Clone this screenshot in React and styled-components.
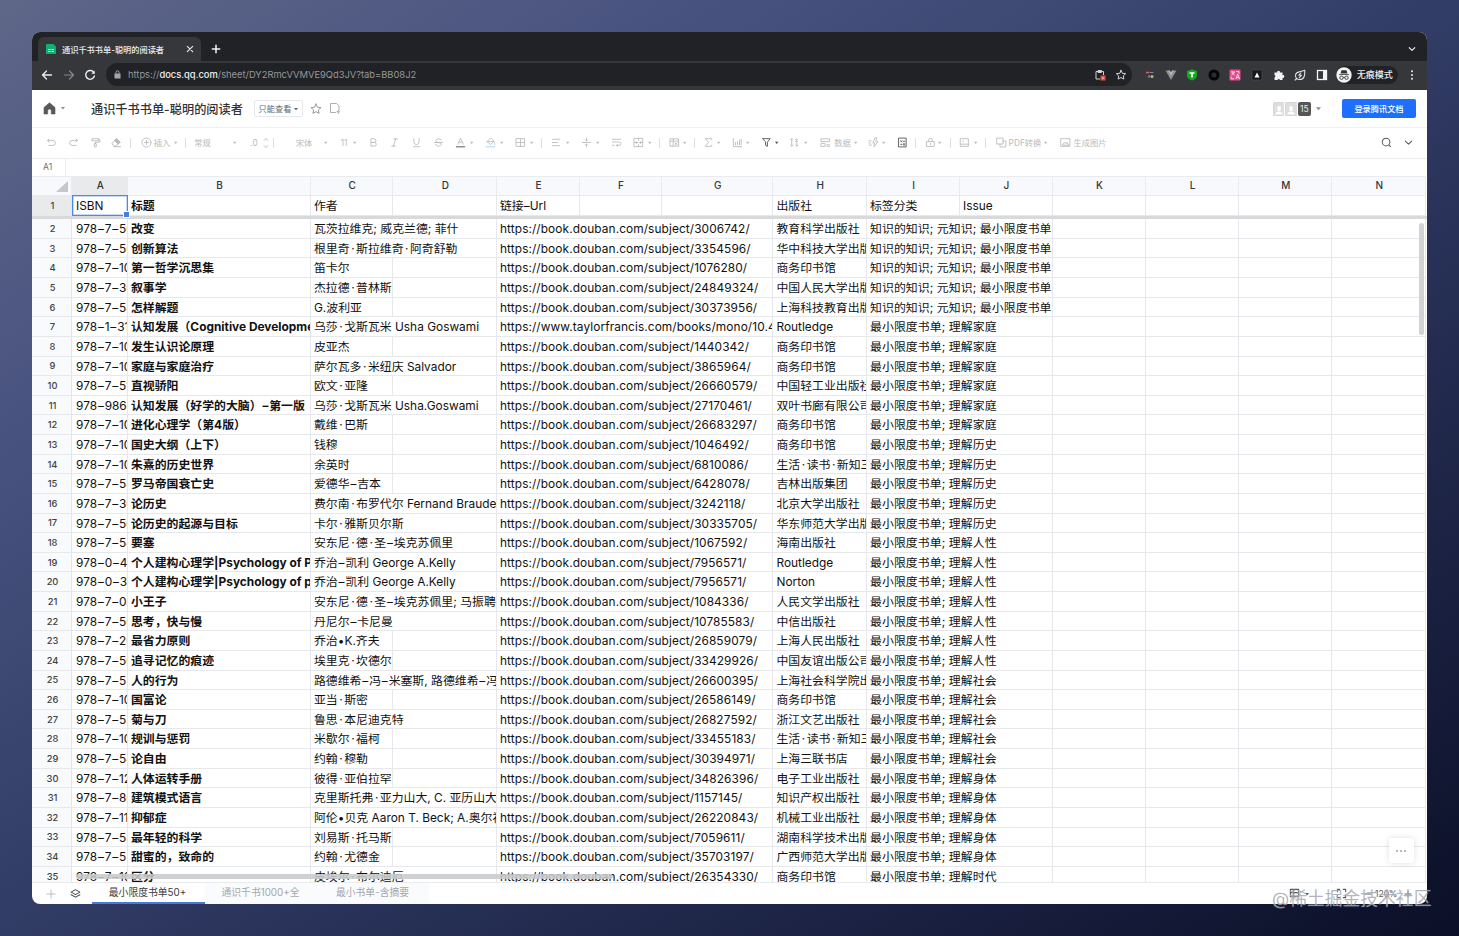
import React from "react";
import styled, { createGlobalStyle, css } from "styled-components";

const Global = createGlobalStyle`
  * { box-sizing: border-box; }
  html, body { margin: 0; height: 100%; }
  body { overflow: hidden; font-family: Inter, "Noto Sans CJK SC", sans-serif; }
`;

const Desktop = styled.div`
  position: relative;
  width: 1459px;
  height: 936px;
  padding: 32px;
  background: linear-gradient(148deg, #5e6788 0%, #4a5480 22%, #333e68 48%, #20284b 72%, #0b0f27 100%);
`;

const Window = styled.div`
  width: 1395px;
  height: 872px;
  display: flex;
  flex-direction: column;
  border-radius: 8px;
  overflow: hidden;
  background: #fff;
`;

/* Browser chrome */
const TabStrip = styled.div`
  height: 29px;
  flex: none;
  display: flex;
  align-items: flex-end;
  padding: 0 11px 0 6px;
  background: #202226;
`;
const BrowserTab = styled.div`
  width: 163px;
  height: 24px;
  display: flex;
  align-items: center;
  padding: 0 5px 0 8px;
  background: #36373b;
  border-radius: 6px 6px 0 0;
  color: #eceded;
`;
const TabTitle = styled.span`
  width: 124px;
  margin-left: 6px;
  padding-bottom: 1px;
  font-size: 8.2px;
  font-weight: 500;
  white-space: nowrap;
`;
const NewTab = styled.div`
  margin-left: 10px;
  height: 24px;
  flex: 1;
  display: flex;
  align-items: center;
  justify-content: space-between;
`;
const AddressRow = styled.div`
  height: 29px;
  flex: none;
  display: flex;
  align-items: center;
  padding: 0 0 2px 9px;
  background: #36373b;
`;
const AddressBar = styled.div`
  width: 1026px;
  height: 23px;
  margin-left: 10px;
  padding: 0 5px 0 8px;
  display: flex;
  align-items: center;
  border-radius: 12px;
  background: #202226;
`;
const Url = styled.span`
  flex: 1;
  margin-left: 7px;
  font-size: 9.4px;
  letter-spacing: -0.02px;
  white-space: nowrap;
  color: #96989b;
  b { font-weight: 500; color: #eeeff0; }
`;
const Extensions = styled.div`
  display: flex;
  align-items: center;
  gap: 9.6px;
  margin-left: 11px;
`;
const Incognito = styled.div`
  width: 62px;
  height: 18px;
  margin-left: 8px;
  display: flex;
  align-items: center;
  border-radius: 9px;
  background: #202226;
  color: #f0f0f0;
  font-size: 9px;
  font-weight: 500;
  white-space: nowrap;
  svg { margin-right: 5px; }
`;

/* Document header */
const Header = styled.header`
  height: 38px;
  flex: none;
  display: flex;
  align-items: center;
  padding: 0 11px;
  border-bottom: 1px solid #f1f2f3;
  color: #8b8d90;
`;
const DocTitle = styled.h1`
  width: 152px;
  margin: 0 11px 0 26px;
  font-size: 12.2px;
  font-weight: 500;
  white-space: nowrap;
  color: #303236;
`;
const ReadOnly = styled.div`
  width: 49px;
  height: 17px;
  margin-right: 7px;
  display: flex;
  align-items: center;
  justify-content: center;
  gap: 3px;
  border: 1px solid #e6e7e9;
  border-radius: 2px;
  font-size: 8.2px;
  line-height: 14px;
  color: #66686c;
  white-space: nowrap;
`;
const Avatars = styled.div`
  display: flex;
  align-items: center;
  margin-left: auto;
`;
const Avatar = styled.div`
  width: 12.5px;
  height: 14px;
  border: 1px solid #d6d6d6;
  border-right-color: #fff;
  border-radius: 2px;
  display: flex;
  justify-content: center;
  align-items: flex-end;
  background: #dedede;
`;
const Count = styled.div`
  width: 13.5px;
  height: 14px;
  margin-right: 5px;
  border-radius: 2px;
  background: #555658;
  color: #e9e9e9;
  font-size: 8.5px;
  line-height: 14px;
  text-align: center;
`;
const LoginButton = styled.button`
  width: 74px;
  height: 19px;
  margin-left: 21px;
  padding: 0 0 1px;
  border: 0;
  border-radius: 2px;
  background: #1e6fff;
  color: #fff;
  font: 500 8.2px Inter, "Noto Sans CJK SC", sans-serif;
  white-space: nowrap;
`;

/* Toolbar */
const Toolbar = styled.div`
  height: 31px;
  flex: none;
  display: flex;
  align-items: center;
  padding: 0 13px;
  border-bottom: 1px solid #ebecee;
  color: #b9babc;
`;
const Tool = styled.span`
  width: ${(p) => p.$w}px;
  margin-left: ${(p) => p.$gap}px;
  flex: none;
  display: flex;
  align-items: center;
  justify-content: center;
  white-space: nowrap;
  font-size: 8.3px;
  line-height: 12px;
  padding-bottom: 1px;
  ${(p) => p.$dark && css`color: #4c4e52;`}
`;
const Divider = styled.i`
  width: 1px;
  height: 10px;
  flex: none;
  margin-left: ${(p) => p.$gap}px;
  background: #dddee0;
`;
const ToolEnd = styled.div`
  display: flex;
  align-items: center;
  gap: 11px;
  margin-left: auto;
  margin-right: 0.5px;
  padding-bottom: 1px;
  color: #55575b;
`;
const FormulaBar = styled.div`
  height: 17px;
  flex: none;
  display: flex;
`;
const CellName = styled.div`
  width: 34px;
  padding-left: 11px;
  border-right: 1px solid #ececee;
  font-size: 8.6px;
  line-height: 17px;
  color: #6d6f73;
`;

/* Grid */
const Sheet = styled.main`
  position: relative;
  height: 706px;
  flex: none;
  overflow: hidden;
`;
const Line = styled.div`
  display: flex;
  height: ${(p) => p.$h ?? 19.625}px;
`;
const ColHead = styled.div`
  width: ${(p) => p.$w}px;
  flex: none;
  display: flex;
  align-items: center;
  justify-content: center;
  padding-left: 2px;
  padding-bottom: 1px;
  border: solid #e9ebef;
  border-width: 1px 1px 1px 0;
  background: ${(p) => (p.$active ? "#e9eaec" : "#f8f9fc")};
  color: #333539;
  font-size: 10px;
  font-weight: 500;
`;
const Corner = styled(ColHead)`
  justify-content: flex-end;
  align-items: flex-end;
  padding: 0 2px 2px 0;
`;
const RowHead = styled.div`
  width: 40px;
  flex: none;
  display: flex;
  align-items: center;
  justify-content: center;
  padding-left: 2px;
  border-right: 1px solid #e3e5e9;
  border-bottom: 1px solid #e6e8ec;
  background: ${(p) => (p.$active ? "#e9eaec" : "#f9fafc")};
  color: #3f4145;
  font-size: 9.3px;
  font-weight: 500;
`;
const Cell = styled.div`
  width: ${(p) => p.$w}px;
  flex: none;
  overflow: hidden;
  padding-left: ${(p) => p.$pad ?? 3.5}px;
  border-right: 1px solid #e6e8ec;
  border-bottom: 1px solid #e6e8ec;
  font-size: 11.88px;
  line-height: 19.4px;
  white-space: pre;
  color: #111;
  font-weight: ${(p) => (p.$bold ? 700 : 400)};
  letter-spacing: ${(p) => p.$track ?? 0}px;
`;
const Mark = styled.span`
  padding: 0 ${(p) => p.$side}px;
`;
const FreezeBar = styled.div`
  height: 3.6px;
  background: #d8d9da;
`;
const Selection = styled.div`
  position: absolute;
  left: 40px;
  top: 19px;
  width: 56px;
  height: 21px;
  border: 1px solid #5088e4;
  box-shadow: inset 0 0 0 0.5px #8fb3f0;
  &::after {
    content: "";
    position: absolute;
    right: -3px;
    bottom: -3px;
    width: 5px;
    height: 5px;
    border: 1px solid #fff;
    background: #4a80dc;
  }
`;
const VScroll = styled.div`
  position: absolute;
  right: 3px;
  top: 47px;
  width: 5px;
  height: 112px;
  border-radius: 3px;
  background: #d2d3d5;
`;
const HScroll = styled.div`
  position: absolute;
  left: 44px;
  bottom: 3px;
  width: 537px;
  height: 5px;
  border-radius: 3px;
  background: rgba(200, 201, 203, 0.88);
`;
const MoreButton = styled.div`
  position: absolute;
  right: 13.5px;
  bottom: 19px;
  width: 25px;
  height: 25px;
  display: flex;
  align-items: center;
  justify-content: center;
  border-radius: 3px;
  background: #fff;
  box-shadow: 0 0 6px rgba(0, 0, 0, 0.13);
  color: #606266;
`;

/* Sheet tabs */
const Footer = styled.footer`
  flex: 1;
  display: flex;
  align-items: stretch;
  border-top: 1px solid #eaebed;
`;
const FooterTools = styled.div`
  width: 60px;
  display: flex;
  align-items: center;
  gap: 14px;
  padding-left: 14px;
`;
const SheetTab = styled.div`
  width: ${(p) => p.$w}px;
  display: flex;
  align-items: center;
  justify-content: center;
  padding-bottom: ${(p) => (p.$active ? 1 : 3)}px;
  padding-right: 2px;
  border-bottom: ${(p) => (p.$active ? "2px solid #4779dc" : "0")};
  background: ${(p) => (p.$active ? "#fff" : "#fafbfc")};
  color: ${(p) => (p.$active ? "#37393d" : "#a5a7aa")};
  font-size: 9.8px;
  white-space: nowrap;
`;
const Status = styled.div`
  margin-left: auto;
  width: 138px;
  display: flex;
  align-items: center;
  font-size: 8.5px;
  color: #55575b;
`;
const StatusItem = styled.span`
  display: flex;
  margin-right: ${(p) => p.$gap}px;
`;
const Watermark = styled.div`
  position: absolute;
  left: 1272px;
  top: 887px;
  font-size: 17.8px;
  line-height: 24px;
  white-space: nowrap;
  color: rgba(150, 152, 160, 0.72);
  text-shadow: 0 0 1px rgba(255, 255, 255, 0.55);
`;

const Icon = ({ d, size = 12, w = 1, fill = "none", box = 12, children, color = "currentColor" }) => (
  <svg width={size} height={size} viewBox={`0 0 ${box} ${box}`} fill={fill} stroke={color} strokeWidth={w} strokeLinecap="round" strokeLinejoin="round">
    {d && <path d={d} />}
    {children}
  </svg>
);

const Caret = ({ size = 4 }) => (
  <svg width={size} height={size} viewBox="0 0 4 4"><path d="M0 1h4L2 3.4z" fill="currentColor" /></svg>
);

const toolPaths = {
  undo: "M3.500 2 1.600 3.800l1.900 1.800M1.800 3.800h5.700a2.700 2.700 0 0 1 0 5.400H3",
  redo: "M8.500 2l1.900 1.800-1.900 1.800M10.200 3.800H4.500a2.700 2.700 0 0 0 0 5.400H9",
  painter: "M2.500 1.800h7v2.400h-7zM9.500 3h1.200v2.600H6v1.600M5.200 7.200h1.600v3.600H5.200z",
  plus: "M11 6A5 5 0 1 1 1 6a5 5 0 0 1 10 0M6 3.700v4.600M3.700 6h4.600",
  bold: "M3.600 2h3a2 2 0 0 1 0 4h-3zM3.600 6h3.500a2 2 0 0 1 0 4H3.600z",
  italic: "M5.200 2H9M3 10h3.800M7.300 2 4.700 10",
  underline: "M3.200 1.800v3.600a2.800 2.800 0 0 0 5.600 0V1.800M2.800 10.600h6.400",
  strike: "M9 3.600C8.600 2.400 7.400 2 6 2c-1.600 0-2.800.8-2.800 2 0 2.700 5.800 1.500 5.800 4 0 1.200-1.300 2-3 2-1.600 0-2.800-.6-3-2M1.500 6h9",
  border: "M1.500 1.800h9v8.400h-9zM6 1.800v8.400M1.500 6h9",
  align: "M1.500 2.500h8M1.500 6h5.500M1.500 9.500h8",
  valign: "M1.500 6h9M6 1.200v3M4.800 3.200 6 4.400l1.200-1.200M6 10.800v-3M4.800 8.800 6 7.600l1.200 1.200",
  wrap: "M1.500 2.500h9M1.500 5.500h7.500a1.800 1.800 0 0 1 0 3.600H6M7.200 7.900 6 9.100l1.200 1.200M1.500 9.100h2",
  merge: "M1.500 1.500h9v9h-9zM6 1.500v2M6 8.500v2M1.500 6h3M3.600 4.800 4.800 6 3.600 7.200M10.500 6h-3M8.400 4.800 7.200 6l1.200 1.200",
  table: "M1.500 2h9v8h-9zM1.500 4.500h9M4.500 2v8M6.500 6.400l2.400 2M8.900 6.400l-2.400 2",
  sigma: "M9.500 3V1.800H2.500L6 6 2.500 10.200h7V9",
  chart: "M1.500 2v8.500h9M3.800 8.500V6M6 8.500V5M8.200 8.500V3.500M10 8.500V2.500",
  filter: "M2 1.800h8L7 5.600v4.600L5 9.200V5.600z",
  sort: "M3 2v8M1.800 8.800 3 10l1.200-1.200M1.800 2.500h2M7 2.500h2.500L7 5h2.500M8.500 6.500V10M7.300 8.800 8.500 10l1.200-1.200",
  data: "M1.500 2h9v3h-9zM1.500 7h4v3.200h-4zM7.500 8.500h3M7.500 10.200h3",
  bolt: "M7.500 1.200 5.200 6.500h2L6.500 10.800 10.800 5H8.500l.8-3.800zM1 4.200h2.600M.8 6.500h2M1.200 8.800h2.600",
  calc: "M2 1.200h8v9.600H2zM4 4l1.500 1.500M5.500 4 4 5.500M7 4.700h1.500M4 8h1.500M7 7.500h1.500M7 8.700h1.500",
  lock: "M2 5h8v5.300H2zM4 5V3.500a2 2 0 0 1 4 0V5M6 7v1.400",
  frame: "M1.800 1.800h8.400v8.400H1.800zM1.800 7.800h8.400M4 4.500h1",
  pdf: "M1.200 1.200h6.500v6.500H1.200zM4.300 7.700v3.100h6.500V4.300H7.700",
  pic: "M1.200 1.800h9.600v8.400H1.200zM2.800 8.600 5 5.600l1.600 1.800L7.800 6l1.600 2.600z",
};

/* kind, gap before, width, label, enabled */
const tools = [
  ["undo", 0], ["redo", 10], ["painter", 10], ["eraser", 9], ["|", 8],
  ["plus", 9], ["t", 2, 16, "插入"], ["v", 4], ["|", 7], ["t", 8, 17, "常规"], ["v", 22], ["t", 12, 10, ".0"], ["step", 4, 6], ["|", 4],
  ["t", 21, 18, "宋体"], ["v", 11], ["t", 11, 10, "11"], ["v", 4], ["bold", 10], ["italic", 9], ["underline", 10], ["strike", 10],
  ["color", 10], ["v", 4], ["bucket", 10], ["v", 4], ["border", 10], ["v", 4], ["|", 7],
  ["align", 8], ["v", 4], ["valign", 10], ["v", 4], ["wrap", 10], ["merge", 10], ["v", 4], ["|", 7],
  ["table", 8], ["v", 3], ["|", 7], ["sigma", 7], ["v", 3], ["chart", 10], ["v", 3], ["filter", 10, 12, "", true], ["v", 3, 4, "", true],
  ["sort", 9], ["v", 4], ["data", 11], ["t", 3, 17, "数据"], ["v", 3], ["bolt", 9], ["v", 3], ["calc", 10, 12, "", true], ["|", 7],
  ["lock", 8], ["v", 2], ["|", 8], ["frame", 7], ["v", 4], ["|", 7], ["pdf", 9], ["t", 2, 32, "PDF转换"], ["v", 3], ["pic", 11], ["t", 2, 34, "生成图片"],
];

function ToolGlyph({ kind, text }) {
  if (kind === "t") return text;
  if (kind === "v") return <Caret size={3.4} />;
  if (kind === "step")
    return <svg width="6" height="12" viewBox="0 0 6 12" fill="none" stroke="currentColor"><path d="M1 3.500 3 1.500l2 2M1 8.500l2 2 2-2" /></svg>;
  if (kind === "eraser")
    return <Icon size={11} w={1}><path d="M1.500 6.500 6 2l4 3.500-4.300 4.300H3.500L1.500 8zM3 10.500h7.500" /><path d="M6 2l4 3.500L7.800 7.800 4 4z" fill="currentColor" /></Icon>;
  if (kind === "color")
    return <Icon size={11} w={0.9}><path d="M3 8 6 1.200 9 8M4.100 5.700h3.800" /><path d="M1 10.700h10" strokeWidth="1.600" strokeLinecap="butt" stroke="#8f9092" /></Icon>;
  if (kind === "bucket")
    return <Icon size={11} w={0.9}><path d="M6 1.200 2.200 5 6 8.200 9.600 5zM2.200 5h7.400M10.500 6.500v1.500" /><path d="M1 10.700h10" strokeWidth="1.600" strokeLinecap="butt" stroke="#c4e6f8" /></Icon>;
  return <Icon size={11} w={0.95} d={toolPaths[kind]} />;
}

const columns = [["A", 55.5], ["B", 183], ["C", 82.5], ["D", 103.5], ["E", 83], ["F", 82], ["G", 111.5], ["H", 93.5], ["I", 93], ["J", 93], ["K", 93], ["L", 93], ["M", 93.5], ["N", 93.5]];
const headCells = { A: "ISBN", B: "标题", C: "作者", E: "链接–Url", H: "出版社", I: "标签分类", J: "Issue" };

const know = "知识的知识; 元知识; 最小限度书单";
const min = (s) => `最小限度书单; 理解${s}`;
/* isbn, title, author, link (douban subject id or full address), publisher, tags, whether the author runs over column D */
const books = [
  ["7–50", "改变", "瓦茨拉维克; 威克兰德; 菲什", "3006742", "教育科学出版社", know, 1],
  ["7–50", "创新算法", "根里奇·斯拉维奇·阿奇舒勒", "3354596", "华中科技大学出版社", know, 1],
  ["7–10", "第一哲学沉思集", "笛卡尔", "1076280", "商务印书馆", know],
  ["7–30", "叙事学", "杰拉德·普林斯", "24849324", "中国人民大学出版社", know],
  ["7–54", "怎样解题", "G.波利亚", "30373956", "上海科技教育出版社", know],
  ["1–31", "认知发展（Cognitive Development）", "乌莎·戈斯瓦米 Usha Goswami", "https://www.taylorfrancis.com/books/mono/10.4324", "Routledge", min("家庭"), 1],
  ["7–10", "发生认识论原理", "皮亚杰", "1440342", "商务印书馆", min("家庭")],
  ["7–10", "家庭与家庭治疗", "萨尔瓦多·米纽庆 Salvador", "3865964", "商务印书馆", min("家庭"), 1],
  ["7–51", "直视骄阳", "欧文·亚隆", "26660579", "中国轻工业出版社", min("家庭")],
  ["986–", "认知发展（好学的大脑）–第一版", "乌莎·戈斯瓦米 Usha.Goswami", "27170461", "双叶书廊有限公司", min("家庭"), 1],
  ["7–10", "进化心理学（第4版）", "戴维·巴斯", "26683297", "商务印书馆", min("家庭")],
  ["7–10", "国史大纲（上下）", "钱穆", "1046492", "商务印书馆", min("历史")],
  ["7–10", "朱熹的历史世界", "余英时", "6810086", "生活·读书·新知三联书店", min("历史")],
  ["7–54", "罗马帝国衰亡史", "爱德华–吉本", "6428078", "吉林出版集团", min("历史")],
  ["7–30", "论历史", "费尔南·布罗代尔 Fernand Braudel", "3242118", "北京大学出版社", min("历史"), 1],
  ["7–50", "论历史的起源与目标", "卡尔·雅斯贝尔斯", "30335705", "华东师范大学出版社", min("历史"), 1],
  ["7–54", "要塞", "安东尼·德·圣–埃克苏佩里", "1067592", "海南出版社", min("人性"), 1],
  ["0–41", "个人建构心理学|Psychology of Personal", "乔治–凯利 George A.Kelly", "7956571", "Routledge", min("人性"), 1],
  ["0–31", "个人建构心理学|Psychology of personal", "乔治–凯利 George A.Kelly", "7956571", "Norton", min("人性"), 1],
  ["7–02", "小王子", "安东尼·德·圣–埃克苏佩里; 马振聘", "1084336", "人民文学出版社", min("人性"), 1],
  ["7–50", "思考，快与慢", "丹尼尔–卡尼曼", "10785583", "中信出版社", min("人性"), 1],
  ["7–20", "最省力原则", "乔治•K.齐夫", "26859079", "上海人民出版社", min("人性")],
  ["7–50", "追寻记忆的痕迹", "埃里克·坎德尔", "33429926", "中国友谊出版公司", min("人性")],
  ["7–55", "人的行为", "路德维希–冯–米塞斯, 路德维希–冯", "26600395", "上海社会科学院出版社", min("社会"), 1],
  ["7–10", "国富论", "亚当·斯密", "26586149", "商务印书馆", min("社会")],
  ["7–53", "菊与刀", "鲁思·本尼迪克特", "26827592", "浙江文艺出版社", min("社会"), 1],
  ["7–10", "规训与惩罚", "米歇尔·福柯", "33455183", "生活·读书·新知三联书店", min("社会")],
  ["7–54", "论自由", "约翰·穆勒", "30394971", "上海三联书店", min("社会")],
  ["7–12", "人体运转手册", "彼得·亚伯拉罕", "34826396", "电子工业出版社", min("身体")],
  ["7–80", "建筑模式语言", "克里斯托弗·亚力山大, C. 亚历山大", "1157145", "知识产权出版社", min("身体"), 1],
  ["7–11", "抑郁症", "阿伦•贝克 Aaron T. Beck; A.奥尔福德", "26220843", "机械工业出版社", min("身体"), 1],
  ["7–53", "最年轻的科学", "刘易斯·托马斯", "7059611", "湖南科学技术出版社", min("身体")],
  ["7–55", "甜蜜的，致命的", "约翰·尤德金", "35703197", "广西师范大学出版社", min("身体")],
  ["7–10", "区分", "皮埃尔·布尔迪厄", "26354330", "商务印书馆", min("时代"), 1],
];

/* Gives name dots and dashes a little room on both sides */
const spaced = (text) =>
  text.split(/([·–])/).map((part, i) =>
    part === "·" ? <Mark key={i} $side={1.5}>·</Mark> : part === "–" ? <Mark key={i} $side={0.85}>–</Mark> : part
  );

function BookRow({ n, book }) {
  const [isbn, title, author, link, press, tags, wide] = book;
  return (
    <Line>
      <RowHead>{n}</RowHead>
      <Cell $w={55.5} $pad={4}>{spaced(`978–${isbn}`)}</Cell>
      <Cell $w={183} $bold>{spaced(title)}</Cell>
      <Cell $w={wide ? 186 : 82.5}>{spaced(author)}</Cell>
      {!wide && <Cell $w={103.5} />}
      <Cell $w={276.5} $track={0.09}>{link.startsWith("http") ? link : `https://book.douban.com/subject/${link}/`}</Cell>
      <Cell $w={93.5}>{spaced(press)}</Cell>
      <Cell $w={186} $track={0.08}>{tags}</Cell>
      <Cell $w={93} /><Cell $w={93} /><Cell $w={93.5} /><Cell $w={93.5} />
    </Line>
  );
}

function ChromeBars() {
  return (
    <>
      <TabStrip>
        <BrowserTab>
          <svg width="10" height="10" viewBox="0 0 10 10"><path d="M1 0h6.500L10 2.500V10H0V1a1 1 0 0 1 1-1z" fill="#10b070" /><path d="M2.200 5h2.300v1H2.200zM5.500 5h2.300v1H5.500zM2.200 7h2.300v1H2.200zM5.500 7h2.300v1H5.500z" fill="#d8fbe9" /></svg>
          <TabTitle>通识千书书单-聪明的阅读者</TabTitle>
          <Icon size={8} box={8} w={1.1} d="M1.300 1.300l5.400 5.400M6.700 1.300 1.300 6.700" />
        </BrowserTab>
        <NewTab>
          <Icon size={10} box={10} w={1.5} color="#f4f4f4" d="M5 1.300v7.400M1.300 5h7.400" />
          <Icon size={8} box={8} w={1.3} color="#dcdcdc" d="M1.300 2.800 4 5.400l2.700-2.600" />
        </NewTab>
      </TabStrip>
      <AddressRow>
        <Icon size={12} w={1.3} color="#eee" d="M10.500 6h-9M5.500 2 1.500 6l4 4" />
        <i style={{ width: 10 }} />
        <Icon size={12} w={1.2} color="#85878a" d="M1.500 6h9M6.500 2l4 4-4 4" />
        <i style={{ width: 9 }} />
        <Icon size={12} w={1.4} color="#eee"><path d="M10 3.800A4.400 4.400 0 1 0 10.400 7" /><path d="M10.600 1.400v3.400H7.200z" fill="#eee" stroke="none" /></Icon>
        <AddressBar>
          <svg width="7" height="9" viewBox="0 0 7 9"><path d="M.5 3.500h6V8.500h-6z" fill="#a5a7aa" /><path d="M2 3.500V2.300a1.500 1.500 0 0 1 3 0v1.200" fill="none" stroke="#a5a7aa" /></svg>
          <Url>https://<b>docs.qq.com</b>/sheet/DY2RmcVVMVE9Qd3JV?tab=BB08J2</Url>
          <svg width="12" height="12" viewBox="0 0 12 12" fill="none" stroke="#d2d3d5"><path d="M6 10H2V2.500h7.500V6M4 2.500V1.500h3.500v2H4z" /><path d="M6.500 6.500h5v5h-5z" fill="#e0523f" stroke="none" /><path d="M8 9h2" stroke="#fff" strokeWidth=".8" /></svg>
          <i style={{ width: 9 }} />
          <Icon size={12} w={1} color="#d2d3d5" d="M6 1.300l1.400 3 3.300.4-2.400 2.200.6 3.200L6 8.500l-2.900 1.600.6-3.200L1.300 4.700l3.300-.4z" />
        </AddressBar>
        <Extensions>
          <svg width="12" height="12" viewBox="0 0 12 12"><path d="M3 3.500h3" stroke="#d4626a" strokeWidth="1.300" /><path d="M6.500 3.500h4" stroke="#8a7da0" strokeWidth="1" /><circle cx="6" cy="7.500" r="1.300" fill="#5a8a80" /><circle cx="9" cy="7.500" r="1.500" fill="#c9b27c" /></svg>
          <svg width="12" height="12" viewBox="0 0 12 12"><path d="M.5 1.500h3L6 6.500l2.500-5h3L6 11z" fill="#8d9093" /><path d="M3 1.500h2L6 3.500l1-2h2L6 7z" fill="#b9bbbd" /></svg>
          <svg width="12" height="12" viewBox="0 0 12 12"><path d="M6 .6 11 2v4.500C11 9 8.500 10.800 6 11.500 3.500 10.800 1 9 1 6.500V2z" fill="#17a81f" /><path d="M3.500 4h5M6 4v4.500" stroke="#fff" strokeWidth="1.700" /></svg>
          <svg width="12" height="12" viewBox="0 0 12 12"><circle cx="6" cy="6" r="4" fill="#2b2c2e" stroke="#050505" strokeWidth="3" /></svg>
          <svg width="12" height="12" viewBox="0 0 12 12"><rect x=".5" y=".5" width="11" height="11" rx="1" fill="#e8498c" /><path d="M2 3h4M4 2v1M2.500 6l3-3M3 4l2.500 2M7 10l1.700-5L10.500 10M7.500 8.500h2.400M2 7.500v2.300h3M7 2.500h3v2" fill="none" stroke="#ffe4f0" strokeWidth=".9" /></svg>
          <svg width="12" height="12" viewBox="0 0 12 12"><rect x="1" y="1" width="10" height="10" rx="1.500" fill="#17181a" stroke="#4c4d50" strokeWidth=".7" /><path d="M3.500 8.500 6 3.500l2.500 5z" fill="#fff" /></svg>
          <svg width="12" height="12" viewBox="0 0 12 12"><path d="M1.500 3.500h2.700a1.400 1.400 0 1 1 2.700 0h2.600v2.700a1.400 1.400 0 1 1 0 2.700V11H7a1.400 1.400 0 0 0-2.600 0H1.500V8.600a1.400 1.400 0 0 0 0-2.600z" fill="#f2f2f2" /></svg>
          <Icon size={12} w={1.1} color="#e4e4e4" d="M10.800 1.300C11 6 10.500 10.500 5.500 10.500a4 4 0 0 1-4-4C1.500 2.500 6 2.800 10.800 1.300zM6.800 4 4.800 6.300h2.600L5.300 8.700M1.200 11l1.500-1.600" />
          <svg width="12" height="12" viewBox="0 0 12 12"><rect x="1.500" y="1.500" width="9" height="9" fill="none" stroke="#f4f4f4" strokeWidth="1.300" /><path d="M7 1.500h3.500v9H7z" fill="#f4f4f4" /></svg>
        </Extensions>
        <Incognito>
          <svg width="16" height="16" viewBox="0 0 16 16"><circle cx="8" cy="8" r="7.700" fill="#f3f3f3" /><path d="M5.500 3.200h5l.9 3.300H4.600zM3 7.200h10v.8H3z" fill="#333" /><g fill="none" stroke="#333" strokeWidth=".9"><circle cx="5.500" cy="10.700" r="1.700" /><circle cx="10.500" cy="10.700" r="1.700" /><path d="M7.200 10.500h1.600" /></g></svg>
          无痕模式
        </Incognito>
        <i style={{ width: 12 }} />
        <svg width="4" height="12" viewBox="0 0 4 12" fill="#ececec"><circle cx="2" cy="2.200" r="1" /><circle cx="2" cy="6" r="1" /><circle cx="2" cy="9.800" r="1" /></svg>
      </AddressRow>
    </>
  );
}

export default function App() {
  return (
    <Desktop>
      <Global />
      <Window>
        <ChromeBars />
        <Header>
          <svg width="13" height="13" viewBox="0 0 13 13"><path d="M6.500.8 12 5.500V12H8.300V8.800a1.800 1.800 0 0 0-3.600 0V12H1V5.500z" fill="#58595c" stroke="#58595c" strokeWidth=".6" strokeLinejoin="round" /></svg>
          <Tool $w={4} $gap={5}><Caret /></Tool>
          <DocTitle>通识千书书单-聪明的阅读者</DocTitle>
          <ReadOnly>只能查看<Caret /></ReadOnly>
          <Icon size={12} w={0.9} color="#8f9194" d="M6 1l1.500 3.200 3.500.4-2.600 2.300.7 3.500L6 8.700l-3.100 1.700.7-3.500L1 4.600l3.500-.4z" />
          <Tool $w={12} $gap={7}><Icon size={12} w={0.9} color="#a2a4a7" d="M6.500 10.500h-5v-9h6l2.500 2.300v4M9.300 8.300v3M7.800 9.800h3" /></Tool>
          <Avatars>
            {[0, 1].map((i) => (
              <Avatar key={i}><svg width="8" height="10" viewBox="0 0 8 10" fill="#fff"><rect x="2.300" y="1" width="3.500" height="5" rx="1.500" /><path d="M.3 9.500c0-2 2-3 3.700-3s3.700 1 3.700 3z" /></svg></Avatar>
            ))}
            <Count>15</Count>
            <Caret size={5} />
          </Avatars>
          <LoginButton>登录腾讯文档</LoginButton>
        </Header>
        <Toolbar>
          {tools.map(([kind, gap, w, text, dark], i) =>
            kind === "|" ? <Divider key={i} $gap={gap} /> : (
              <Tool key={i} $gap={gap} $w={w ?? (kind === "v" ? 4 : 12)} $dark={dark}><ToolGlyph kind={kind} text={text} /></Tool>
            )
          )}
          <ToolEnd>
            <Icon size={11} w={1.1} d="M9.700 5.500a4.200 4.200 0 1 1-8.400 0 4.200 4.200 0 0 1 8.400 0M8.800 8.800l1.600 1.600" />
            <Icon size={11} w={1.1} d="M2.500 4.500 6 7.800l3.500-3.300" />
          </ToolEnd>
        </Toolbar>
        <FormulaBar><CellName>A1</CellName></FormulaBar>
        <Sheet>
          <Line $h={19.6}>
            <Corner $w={40}><svg width="14" height="13" viewBox="0 0 14 13"><path d="M13 1v11H1z" fill="#c5c7ca" /></svg></Corner>
            {columns.map(([c, w]) => <ColHead key={c} $w={w} $active={c === "A"}>{c}</ColHead>)}
          </Line>
          <Line $h={20}>
            <RowHead $active>1</RowHead>
            {columns.map(([c, w]) => <Cell key={c} $w={w} $bold={c === "B"} $pad={c === "A" ? 4 : 3.5}>{headCells[c]}</Cell>)}
          </Line>
          <FreezeBar />
          {books.map((b, i) => <BookRow key={i} n={i + 2} book={b} />)}
          <Selection />
          <VScroll />
          <HScroll />
          <MoreButton><svg width="12" height="4" viewBox="0 0 12 4" fill="currentColor"><circle cx="2" cy="2" r=".8" /><circle cx="6" cy="2" r=".8" /><circle cx="10" cy="2" r=".8" /></svg></MoreButton>
        </Sheet>
        <Footer>
          <FooterTools>
            <Icon size={10} box={10} w={0.9} color="#b5b7ba" d="M5 1v8M1 5h8" />
            <Icon size={11} w={1.1} color="#4b4d51" d="M6 1.800 10.800 4.500 6 7.200 1.200 4.500zM1.200 7.300 6 10l4.800-2.700" />
          </FooterTools>
          <SheetTab $w={113} $active>最小限度书单50+</SheetTab>
          <SheetTab $w={113}>通识千书1000+全</SheetTab>
          <SheetTab $w={111}>最小书单-含摘要</SheetTab>
          <Status>
            <StatusItem $gap={5}><Icon size={11} w={1.2} d="M1.500 1.500h9v8h-9zM1.500 5h9M5 1.500v8" /></StatusItem>
            <StatusItem $gap={27}><Caret /></StatusItem>
            <StatusItem $gap={17}><Icon size={11} w={1.2} d="M1.500 4V1.500H4M8 1.500h2.500V4M10.500 8v2.500H8M4 10.500H1.500V8" /></StatusItem>
            <StatusItem $gap={3}><Icon size={8} box={8} w={1} d="M1 4h6" /></StatusItem>
            <StatusItem $gap={7}>120%</StatusItem>
            <Icon size={8} box={8} w={1} d="M4 1v6M1 4h6" />
          </Status>
        </Footer>
      </Window>
      <Watermark>@稀土掘金技术社区</Watermark>
    </Desktop>
  );
}
